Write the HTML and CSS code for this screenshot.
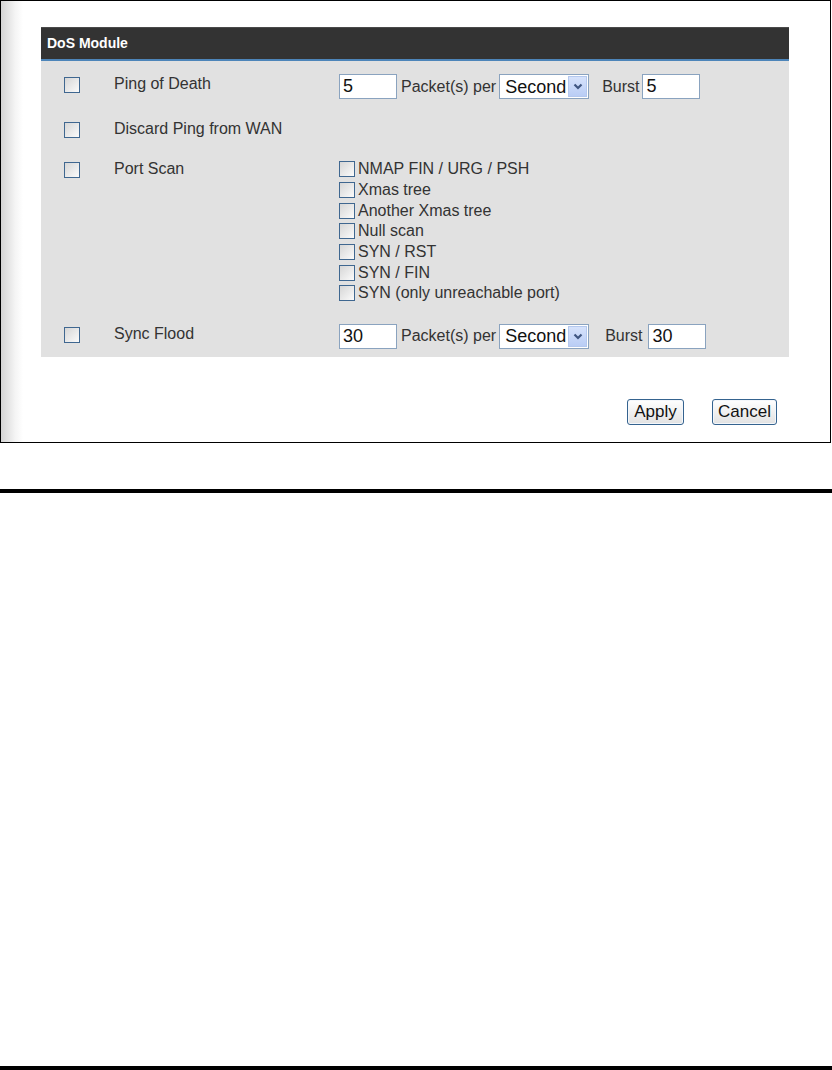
FILE: index.html
```html
<!DOCTYPE html>
<html lang="en">

<head>
  <meta charset="UTF-8" />
  <title>DoS Module</title>
  <link rel="stylesheet" href="styles.css">
</head>

<body>
  <div class="frame">
    <div class="panel">
      <div class="panel-title">DoS Module</div>

      <div class="panel-body">
        <!-- Ping of Death -->
        <div class="row">
          <input class="check" type="checkbox" />
          <span class="label">Ping of Death</span>
          <div class="controls">
            <input class="num" type="text" value="5" />
            <span class="txt">Packet(s) per</span>
            <span class="select-wrap">
              <select class="unit">
                <option>Second</option>
                <option>Minute</option>
              </select>
              <span class="arrow"><svg width="10" height="7" viewBox="0 0 10 7"><path d="M1.5 1.5l3.5 3.5 3.5-3.5" fill="none" stroke="#3f5680" stroke-width="2.2"/></svg></span>
            </span>
            <span class="txt burst">Burst</span>
            <input class="num" type="text" value="5" />
          </div>
        </div>

        <!-- Discard Ping from WAN -->
        <div class="row">
          <input class="check" type="checkbox" />
          <span class="label">Discard Ping from WAN</span>
        </div>

        <!-- Port Scan -->
        <div class="row">
          <input class="check" type="checkbox" />
          <span class="label">Port Scan</span>
          <div class="scan-list">
            <label class="scan-item"><input class="check" type="checkbox" />NMAP FIN / URG / PSH</label>
            <label class="scan-item"><input class="check" type="checkbox" />Xmas tree</label>
            <label class="scan-item"><input class="check" type="checkbox" />Another Xmas tree</label>
            <label class="scan-item"><input class="check" type="checkbox" />Null scan</label>
            <label class="scan-item"><input class="check" type="checkbox" />SYN / RST</label>
            <label class="scan-item"><input class="check" type="checkbox" />SYN / FIN</label>
            <label class="scan-item"><input class="check" type="checkbox" />SYN (only unreachable port)</label>
          </div>
        </div>

        <!-- Sync Flood -->
        <div class="row">
          <input class="check" type="checkbox" />
          <span class="label">Sync Flood</span>
          <div class="controls wide">
            <input class="num" type="text" value="30" />
            <span class="txt">Packet(s) per</span>
            <span class="select-wrap">
              <select class="unit">
                <option>Second</option>
                <option>Minute</option>
              </select>
              <span class="arrow"><svg width="10" height="7" viewBox="0 0 10 7"><path d="M1.5 1.5l3.5 3.5 3.5-3.5" fill="none" stroke="#3f5680" stroke-width="2.2"/></svg></span>
            </span>
            <span class="txt burst">Burst</span>
            <input class="num" type="text" value="30" />
          </div>
        </div>
      </div>
    </div>

    <div class="actions">
      <button class="btn btn-apply">Apply</button>
      <button class="btn btn-cancel">Cancel</button>
    </div>
  </div>

  <div class="rule"></div>
  <div class="rule rule-bottom"></div>
</body>

</html>
```

FILE: styles.css
```css
/* Router admin page: DoS module */
:root {
  --panel: #e1e1e1;
  --title: #333333;
  --accent: #4d85b9;
  --text: #333333;
  --field-border: #8aa3bf;
}
* {
  box-sizing: border-box;
}
body {
  margin: 0;
  background: #fff;
  font-family: "Liberation Sans", Arial, sans-serif;
  color: var(--text);
}
.frame {
  width: 831px;
  height: 443px;
  border: 1px solid #000;
  background: linear-gradient(to right, #d4d4d4 0, #f4f4f4 14px, #fff 22px);
  padding: 26px 0 0 40px;
}
.panel {
  width: 748px;
  background: var(--panel);
}
.panel-title {
  height: 34px;
  line-height: 31px;
  padding-left: 6px;
  background: var(--title);
  border-top: 1px solid #4a4a4a;
  border-bottom: 2px solid var(--accent);
  color: #fff;
  font-size: 14px;
  font-weight: bold;
}
.panel-body {
  display: flex;
  flex-direction: column;
  gap: 20px;
  padding: 13px 0 8px 23px;
}
.row {
  display: grid;
  grid-template-columns: 50px 225px auto;
  align-items: start;
}
.check {
  appearance: none;
  -webkit-appearance: none;
  width: 16px;
  height: 16px;
  margin: 0;
  border: 1px solid #3f6790;
  background: linear-gradient(135deg, #d6d6d6, #fbfbfb);
}
.row > .check {
  margin-top: 3px;
}
.label {
  font-size: 16px;
  line-height: 20px;
}
.controls {
  display: flex;
  align-items: center;
  height: 25px;
}
.txt {
  font-size: 16px;
  margin: 0 3px 0 4px;
}
.txt.burst {
  margin: 0 3px 0 13px;
}
.controls.wide .txt.burst {
  margin: 0 6px 0 16px;
}
.num {
  width: 58px;
  height: 25px;
  margin: 0;
  padding: 0 3px;
  border: 1px solid var(--field-border);
  background: #fff;
  font-family: inherit;
  font-size: 18px;
  color: #111;
  outline: none;
}
.select-wrap {
  position: relative;
  display: inline-block;
}
.unit {
  appearance: none;
  -webkit-appearance: none;
  display: block;
  width: 90px;
  height: 25px;
  margin: 0;
  padding: 0 0 0 5px;
  border: 1px solid var(--field-border);
  border-radius: 0;
  background: #fff;
  font-family: inherit;
  font-size: 18px;
  color: #111;
}
.arrow {
  position: absolute;
  top: 2px;
  right: 2px;
  width: 19px;
  height: 21px;
  display: flex;
  align-items: center;
  justify-content: center;
  background: linear-gradient(#d6e2fb, #b9cdf5);
  border: 1px solid #b4c8ee;
  pointer-events: none;
}
/* Port scan options */
.scan-list {
  display: flex;
  flex-direction: column;
}
.scan-item {
  display: flex;
  align-items: center;
  height: 20.67px;
  font-size: 16px;
}
.scan-item .check {
  margin-right: 3px;
}
/* Buttons */
.actions {
  display: flex;
  justify-content: flex-end;
  gap: 28px;
  width: 748px;
  padding-right: 12px;
  margin-top: 42px;
}
.btn {
  height: 26px;
  padding: 0;
  border: 1px solid #35638f;
  border-radius: 3px;
  background: linear-gradient(#ffffff, #e2e2e2);
  box-shadow: inset 0 0 0 1px #f4f7fb;
  font-family: inherit;
  font-size: 17px;
  color: #111;
  cursor: pointer;
}
.btn-apply {
  width: 57px;
}
.btn-cancel {
  width: 65px;
}
.rule {
  height: 4px;
  margin-top: 46px;
  background: #000;
}
.rule-bottom {
  margin-top: 573px;
}
```
